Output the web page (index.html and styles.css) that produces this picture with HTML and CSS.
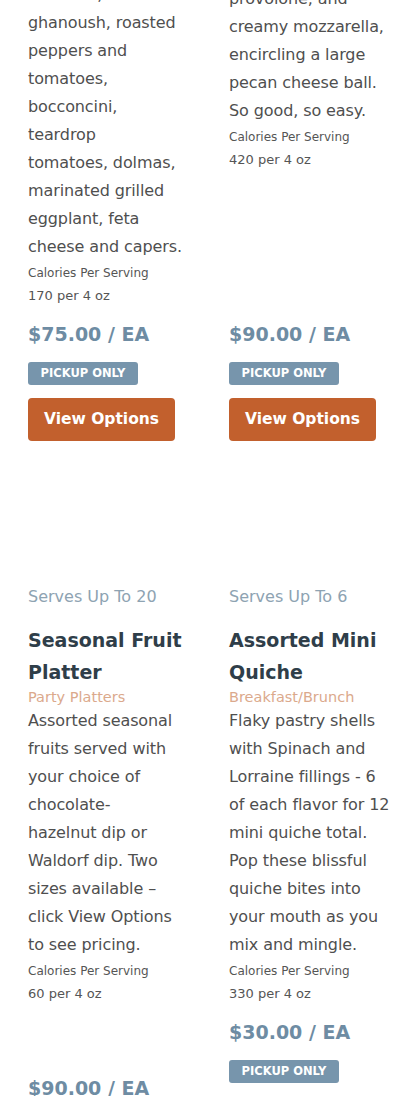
FILE: index.html
```html
<!DOCTYPE html>
<html lang="en">
<head>
<meta charset="utf-8">
<title>Catering Menu</title>
<link rel="stylesheet" href="styles.css">
</head>
<body>
<main class="products">
  <section class="row row-first">
    <article class="card">
      <p class="desc">hummus, baba<br>ghanoush, roasted<br>peppers and<br>tomatoes,<br>bocconcini,<br>teardrop<br>tomatoes, dolmas,<br>marinated grilled<br>eggplant, feta<br>cheese and capers.</p>
      <p class="cal-label">Calories Per Serving</p>
      <p class="cal-value">170 per 4 oz</p>
      <div class="buy">
        <p class="price">$75.00 / EA</p>
        <span class="badge">PICKUP ONLY</span>
        <a class="btn" href="#">View Options</a>
      </div>
    </article>
    <article class="card card-shift">
      <p class="desc">provolone, and<br>creamy mozzarella,<br>encircling a large<br>pecan cheese ball.<br>So good, so easy.</p>
      <p class="cal-label">Calories Per Serving</p>
      <p class="cal-value">420 per 4 oz</p>
      <div class="buy">
        <p class="price">$90.00 / EA</p>
        <span class="badge">PICKUP ONLY</span>
        <a class="btn" href="#">View Options</a>
      </div>
    </article>
  </section>
  <section class="row row-second">
    <article class="card">
      <div class="thumb"></div>
      <p class="serves">Serves Up To 20</p>
      <h2 class="title">Seasonal Fruit<br>Platter</h2>
      <p class="cat">Party Platters</p>
      <p class="desc">Assorted seasonal<br>fruits served with<br>your choice of<br>chocolate-<br>hazelnut dip or<br>Waldorf dip. Two<br>sizes available –<br>click View Options<br>to see pricing.</p>
      <p class="cal-label">Calories Per Serving</p>
      <p class="cal-value">60 per 4 oz</p>
      <div class="buy buy-sizes">
        <p class="price">$90.00 / EA</p>
        <span class="badge">PICKUP ONLY</span>
        <a class="btn" href="#">View Options</a>
      </div>
    </article>
    <article class="card">
      <div class="thumb"></div>
      <p class="serves">Serves Up To 6</p>
      <h2 class="title">Assorted Mini<br>Quiche</h2>
      <p class="cat">Breakfast/Brunch</p>
      <p class="desc">Flaky pastry shells<br>with Spinach and<br>Lorraine fillings - 6<br>of each flavor for 12<br>mini quiche total.<br>Pop these blissful<br>quiche bites into<br>your mouth as you<br>mix and mingle.</p>
      <p class="cal-label">Calories Per Serving</p>
      <p class="cal-value">330 per 4 oz</p>
      <div class="buy">
        <p class="price">$30.00 / EA</p>
        <span class="badge">PICKUP ONLY</span>
        <a class="btn" href="#">View Options</a>
      </div>
    </article>
  </section>
</main>
</body>
</html>
```
FILE: styles.css
```css
* { box-sizing: border-box; }
html, body { margin: 0; padding: 0; background: #fff; }
body {
  font-family: "DejaVu Sans", "Open Sans", sans-serif;
  color: #4d4d4d;
  overflow: hidden;
}
p, h2 { margin: 0; }
.products {
  padding: 0 28px;
  margin-top: -19px;
}
.row {
  display: grid;
  grid-template-columns: 153px 153px;
  column-gap: 48px;
}
.row-second { align-items: start; }
.card {
  display: flex;
  flex-direction: column;
  align-items: flex-start;
  height: 100%;
}
.row-second .card { height: auto; }
.card-shift { padding-top: 4px; }
.desc {
  font-size: 16px;
  line-height: 28px;
  letter-spacing: -0.1px;
  color: #4f4f4f;
  white-space: nowrap;
}
.cal-label {
  font-size: 12px;
  line-height: 20px;
  margin-top: 2px;
  color: #555;
  white-space: nowrap;
}
.cal-value {
  font-size: 13px;
  line-height: 22px;
  margin-top: 2px;
  color: #555;
}
.buy {
  margin-top: auto;
  padding-top: 12px;
  display: flex;
  flex-direction: column;
  align-items: flex-start;
}
.buy-sizes { padding-top: 68px; }
.price {
  font-size: 19px;
  line-height: 30px;
  font-weight: 700;
  color: #6e8ca3;
  white-space: nowrap;
}
.badge {
  margin-top: 13px;
  display: inline-block;
  height: 23px;
  width: 110px;
  line-height: 23px;
  text-align: center;
  font-size: 11.5px;
  font-weight: 700;
  color: #fff;
  background: #7795ac;
  border-radius: 3px;
}
.btn {
  margin-top: 13px;
  display: inline-block;
  width: 147px;
  height: 43px;
  line-height: 43px;
  text-align: center;
  background: #c2602d;
  color: #fff;
  font-size: 15.5px;
  font-weight: 700;
  text-decoration: none;
  border-radius: 4px;
}
.thumb {
  height: 144px;
}
.serves {
  font-size: 16px;
  line-height: 24px;
  color: #8ea3b2;
  white-space: nowrap;
}
.title {
  margin-top: 15px;
  font-size: 19px;
  line-height: 32px;
  font-weight: 700;
  color: #2f3e49;
  white-space: nowrap;
}
.cat {
  font-size: 14.5px;
  line-height: 20px;
  margin-top: -1px;
  color: #dba98c;
}
```
